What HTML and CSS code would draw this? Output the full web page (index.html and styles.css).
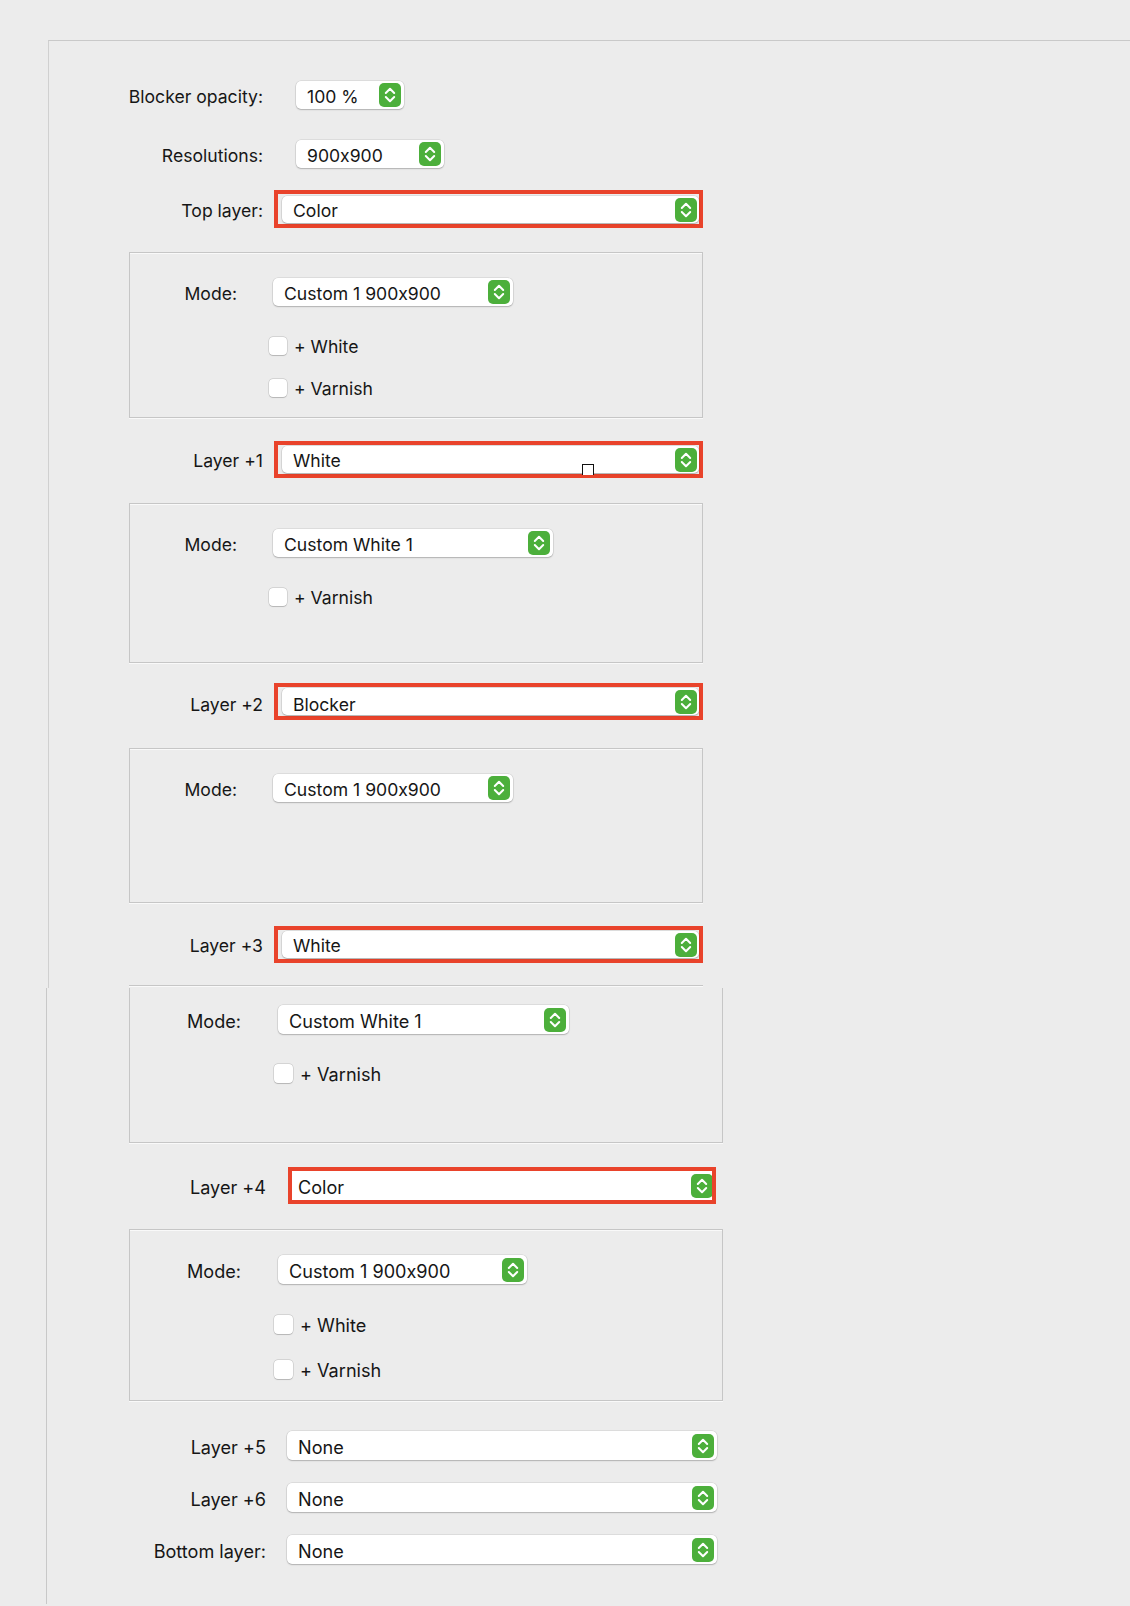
FILE: index.html
```html
<!DOCTYPE html>
<html lang="en">
  <head>
    <meta charset="UTF-8" />
    <meta name="viewport" content="width=device-width, initial-scale=1.0" />
    <title>Layer Settings</title>
    <link rel="stylesheet" href="styles.css">
  </head>
  <body>
    <!-- upper half of the settings pane -->
    <section class="pane pane-top">
      <div class="row row-opacity">
        <span class="row-label">Blocker opacity:</span>
        <div class="popup popup-opacity">
          <span class="popup-value">100 %</span>
          <span class="stepper"><svg viewBox="0 0 22 24"><path d="M6.8 10 11 5.8 15.2 10M6.8 14 11 18.2 15.2 14" /></svg></span>
        </div>
      </div>

      <div class="row row-resolution">
        <span class="row-label">Resolutions:</span>
        <div class="popup popup-resolution">
          <span class="popup-value">900x900</span>
          <span class="stepper"><svg viewBox="0 0 22 24"><path d="M6.8 10 11 5.8 15.2 10M6.8 14 11 18.2 15.2 14" /></svg></span>
        </div>
      </div>

      <div class="row row-layer row-top">
        <span class="row-label">Top layer:</span>
        <div class="highlight">
          <div class="popup">
            <span class="popup-value">Color</span>
            <span class="stepper"><svg viewBox="0 0 22 24"><path d="M6.8 10 11 5.8 15.2 10M6.8 14 11 18.2 15.2 14" /></svg></span>
          </div>
        </div>
      </div>

      <div class="group group-1">
        <div class="mode-row">
          <span class="mode-label">Mode:</span>
          <div class="popup popup-mode">
            <span class="popup-value">Custom 1 900x900</span>
            <span class="stepper"><svg viewBox="0 0 22 24"><path d="M6.8 10 11 5.8 15.2 10M6.8 14 11 18.2 15.2 14" /></svg></span>
          </div>
        </div>
        <div class="check-row check-first"><span class="checkbox"></span>+ White</div>
        <div class="check-row"><span class="checkbox"></span>+ Varnish</div>
      </div>

      <div class="row row-layer row-l1">
        <span class="row-label">Layer +1</span>
        <div class="highlight">
          <div class="popup">
            <span class="popup-value">White</span>
            <span class="stepper"><svg viewBox="0 0 22 24"><path d="M6.8 10 11 5.8 15.2 10M6.8 14 11 18.2 15.2 14" /></svg></span>
          </div>
          <span class="cursor-mark"></span>
        </div>
      </div>

      <div class="group group-2">
        <div class="mode-row">
          <span class="mode-label">Mode:</span>
          <div class="popup popup-mode popup-white">
            <span class="popup-value">Custom White 1</span>
            <span class="stepper"><svg viewBox="0 0 22 24"><path d="M6.8 10 11 5.8 15.2 10M6.8 14 11 18.2 15.2 14" /></svg></span>
          </div>
        </div>
        <div class="check-row check-first"><span class="checkbox"></span>+ Varnish</div>
      </div>

      <div class="row row-layer row-l2">
        <span class="row-label">Layer +2</span>
        <div class="highlight">
          <div class="popup">
            <span class="popup-value">Blocker</span>
            <span class="stepper"><svg viewBox="0 0 22 24"><path d="M6.8 10 11 5.8 15.2 10M6.8 14 11 18.2 15.2 14" /></svg></span>
          </div>
        </div>
      </div>

      <div class="group group-3">
        <div class="mode-row">
          <span class="mode-label">Mode:</span>
          <div class="popup popup-mode">
            <span class="popup-value">Custom 1 900x900</span>
            <span class="stepper"><svg viewBox="0 0 22 24"><path d="M6.8 10 11 5.8 15.2 10M6.8 14 11 18.2 15.2 14" /></svg></span>
          </div>
        </div>
      </div>

      <div class="row row-layer row-l3">
        <span class="row-label">Layer +3</span>
        <div class="highlight">
          <div class="popup">
            <span class="popup-value">White</span>
            <span class="stepper"><svg viewBox="0 0 22 24"><path d="M6.8 10 11 5.8 15.2 10M6.8 14 11 18.2 15.2 14" /></svg></span>
          </div>
        </div>
      </div>

      <div class="group-edge"></div>
    </section>

    <!-- lower half, captured at a slightly larger scale -->
    <section class="pane pane-bottom">
      <div class="group group-4">
        <div class="mode-row">
          <span class="mode-label">Mode:</span>
          <div class="popup popup-mode popup-white">
            <span class="popup-value">Custom White 1</span>
            <span class="stepper"><svg viewBox="0 0 22 24"><path d="M6.8 10 11 5.8 15.2 10M6.8 14 11 18.2 15.2 14" /></svg></span>
          </div>
        </div>
        <div class="check-row check-first"><span class="checkbox"></span>+ Varnish</div>
      </div>

      <div class="row row-layer row-l4">
        <span class="row-label">Layer +4</span>
        <div class="highlight highlight-tight">
          <div class="popup">
            <span class="popup-value">Color</span>
            <span class="stepper"><svg viewBox="0 0 22 24"><path d="M6.8 10 11 5.8 15.2 10M6.8 14 11 18.2 15.2 14" /></svg></span>
          </div>
        </div>
      </div>

      <div class="group group-5">
        <div class="mode-row">
          <span class="mode-label">Mode:</span>
          <div class="popup popup-mode">
            <span class="popup-value">Custom 1 900x900</span>
            <span class="stepper"><svg viewBox="0 0 22 24"><path d="M6.8 10 11 5.8 15.2 10M6.8 14 11 18.2 15.2 14" /></svg></span>
          </div>
        </div>
        <div class="check-row check-first"><span class="checkbox"></span>+ White</div>
        <div class="check-row"><span class="checkbox"></span>+ Varnish</div>
      </div>

      <div class="row row-plain row-l5">
        <span class="row-label">Layer +5</span>
        <div class="popup popup-wide">
          <span class="popup-value">None</span>
          <span class="stepper"><svg viewBox="0 0 22 24"><path d="M6.8 10 11 5.8 15.2 10M6.8 14 11 18.2 15.2 14" /></svg></span>
        </div>
      </div>

      <div class="row row-plain">
        <span class="row-label">Layer +6</span>
        <div class="popup popup-wide">
          <span class="popup-value">None</span>
          <span class="stepper"><svg viewBox="0 0 22 24"><path d="M6.8 10 11 5.8 15.2 10M6.8 14 11 18.2 15.2 14" /></svg></span>
        </div>
      </div>

      <div class="row row-plain">
        <span class="row-label">Bottom layer:</span>
        <div class="popup popup-wide">
          <span class="popup-value">None</span>
          <span class="stepper"><svg viewBox="0 0 22 24"><path d="M6.8 10 11 5.8 15.2 10M6.8 14 11 18.2 15.2 14" /></svg></span>
        </div>
      </div>
    </section>
  </body>
</html>
```

FILE: styles.css
```css
body {
  margin: 0;
  padding: 0;
  background-color: #ececec;
  color: #161616;
  font-family: Inter, "Noto Sans", sans-serif;
  font-size: 17.6px;
  font-feature-settings: "calt" 0;
}

.pane {
  display: flex;
  flex-direction: column;
  align-items: flex-start;
}

.pane-top {
  margin: 40px 0 0 48px;
  padding-bottom: 1px;
  border-top: 1px solid #c9c9c9;
  border-left: 1px solid #d0d0d0;
}

.pane-bottom {
  margin-left: 46px;
  padding-bottom: 40px;
  border-left: 1px solid #c8c8c8;
  font-size: 18.1px;
}

/* label + control rows */
.row {
  display: flex;
  align-items: center;
}

.row-label {
  width: 214px;
  padding-top: 2px;
  text-align: right;
  white-space: nowrap;
}

.pane-bottom .row-label {
  width: 219px;
}

.row-opacity {
  margin-top: 40px;
}

.row-resolution {
  margin-top: 31px;
}

.row-opacity .popup,
.row-resolution .popup {
  margin-left: 33px;
}

.row-top {
  margin-top: 22px;
}

.row-layer .highlight {
  margin-left: 11px;
}

.row-l1 {
  margin-top: 23px;
}

.row-l2 {
  margin-top: 20px;
}

.row-l2 .row-label {
  padding-top: 5px;
}

.row-l3 {
  margin-top: 23px;
}

.row-l4 {
  margin-top: 24px;
}

.row-l4 .highlight {
  margin-left: 22px;
}

.row-plain {
  margin-top: 23px;
}

.row-plain .popup {
  margin-left: 21px;
}

.row-l5 {
  margin-top: 30px;
}

/* popup buttons */
.popup {
  display: flex;
  align-items: center;
  justify-content: space-between;
  box-sizing: border-box;
  height: 28px;
  padding: 0 3px 0 11px;
  background: #ffffff;
  border-radius: 5px;
  box-shadow: 0 0 0 0.5px rgba(0, 0, 0, 0.13), 0 1px 1.5px rgba(0, 0, 0, 0.2);
  white-space: nowrap;
}

.popup-value {
  padding-top: 2px;
}

.row-l2 .popup-value {
  padding-top: 5px;
}

.pane-bottom .popup {
  height: 29px;
}

.popup-opacity {
  width: 108px;
}

.popup-resolution {
  width: 148px;
}

.popup-mode {
  width: 240px;
}

.popup-mode.popup-white {
  width: 280px;
}

.pane-bottom .popup-mode {
  width: 249px;
}

.pane-bottom .popup-mode.popup-white {
  width: 291px;
}

.popup-wide {
  width: 430px;
}

.stepper {
  display: flex;
  flex-shrink: 0;
  width: 22px;
  height: 24px;
  background: #4caf3b;
  border-radius: 5px;
}

.stepper svg {
  width: 22px;
  height: 24px;
  fill: none;
  stroke: #ffffff;
  stroke-width: 2;
  stroke-linecap: round;
  stroke-linejoin: round;
}

/* red annotation frames */
.highlight {
  position: relative;
  display: flex;
  box-sizing: border-box;
  width: 429px;
  height: 38px;
  padding: 2px 0 1px 4px;
  border: 4px solid #e9432b;
}

.row-l1 .highlight,
.row-l2 .highlight,
.row-l3 .highlight {
  height: 37px;
  padding-top: 1px;
}

.highlight .popup {
  flex: 1;
  height: 27px;
  padding-right: 2px;
}

.highlight-tight {
  width: 428px;
  height: 37px;
  padding: 0;
  overflow: hidden;
}

.highlight-tight .popup {
  height: 29px;
  margin-right: -3px;
  padding-left: 6px;
  border-radius: 0;
}

.cursor-mark {
  position: absolute;
  left: 304px;
  top: 19px;
  width: 10px;
  height: 10px;
  background: #ffffff;
  border: 1px solid #111111;
  border-bottom: none;
}

/* grouped mode boxes */
.group {
  box-sizing: border-box;
  width: 574px;
  margin-left: 80px;
  padding-top: 25px;
  border: 1px solid #c6c6c6;
  box-shadow: inset 0 1px 0 #f9f9f9, 0 1px 0 #f9f9f9;
}

.group-1 {
  height: 166px;
  margin-top: 24px;
}

.group-2 {
  height: 160px;
  margin-top: 25px;
}

.group-3 {
  height: 155px;
  margin-top: 28px;
}

.group-edge {
  width: 574px;
  height: 1px;
  margin: 22px 0 0 80px;
  border-top: 1px solid #c6c6c6;
  background: #f9f9f9;
}

.group-4 {
  width: 594px;
  height: 155px;
  margin-left: 82px;
  padding-top: 17px;
  border-top: none;
  box-shadow: 0 1px 0 #f9f9f9;
}

.group-5 {
  width: 594px;
  height: 172px;
  margin-top: 25px;
  margin-left: 82px;
}

.mode-row {
  display: flex;
  align-items: center;
}

.mode-label {
  width: 107px;
  margin-right: 36px;
  padding-top: 2px;
  text-align: right;
}

.pane-bottom .mode-label {
  width: 111px;
  margin-right: 37px;
}

.check-row {
  display: flex;
  align-items: center;
  height: 18px;
  margin-top: 24px;
  padding-left: 139px;
}

.check-first {
  margin-top: 31px;
}

.pane-bottom .check-row {
  height: 19px;
  margin-top: 26px;
  padding-left: 144px;
}

.pane-bottom .check-first {
  margin-top: 31px;
}

.group-4 .check-first {
  margin-top: 30px;
}

.checkbox {
  width: 18px;
  height: 18px;
  margin-right: 7px;
  background: #ffffff;
  border-radius: 4px;
  box-shadow: 0 0 0 0.5px rgba(0, 0, 0, 0.18), 0 0.5px 1px rgba(0, 0, 0, 0.15);
}

.pane-bottom .checkbox {
  width: 19px;
  height: 19px;
}
```
